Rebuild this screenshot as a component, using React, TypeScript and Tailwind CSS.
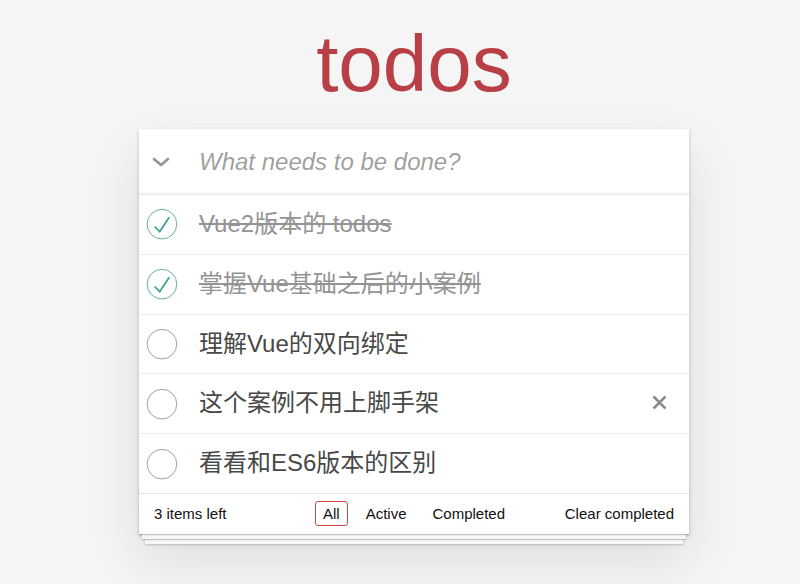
import React from "react";

const todos = [
  { text: "Vue2版本的 todos", done: true },
  { text: "掌握Vue基础之后的小案例", done: true },
  { text: "理解Vue的双向绑定", done: false },
  { text: "这个案例不用上脚手架", done: false, hover: true },
  { text: "看看和ES6版本的区别", done: false },
];

function Check({ done }: { done: boolean }) {
  return (
    <svg width="40" height="40" viewBox="-10 -18 100 135" className="shrink-0">
      <circle cx="50" cy="50" r="50" fill="none" stroke={done ? "#59A193" : "#949494"} strokeWidth="3" />
      {done && <path fill="#3EA390" d="M72 25L42 71 27 56l-4 4 20 20 34-52z" />}
    </svg>
  );
}

export default function App() {
  return (
    <div className="min-h-[584px] bg-[#f5f5f5] font-['Liberation_Sans','Noto_Sans_CJK_SC',sans-serif] text-[14px] leading-[1.4em] text-[#111]">
      <div className="flex justify-center pl-[28px] pt-[24px] pb-[40px]">
        <div className="w-[550px]">
          <h1 className="text-center text-[80px] leading-[80px] font-normal text-[#b83f45]">todos</h1>
          <section className="relative mt-[25px] bg-white shadow-[0_2px_4px_0_rgba(0,0,0,0.2),0_25px_50px_0_rgba(0,0,0,0.1)]">
            <header className="flex h-[65px] items-center shadow-[inset_0_-2px_1px_rgba(0,0,0,0.03)]">
              <div className="flex w-[44px] shrink-0 justify-center">
                <svg width="18" height="10" viewBox="0 0 18 10">
                  <path d="M2 2 L9 8 L16 2" fill="none" stroke="#949494" strokeWidth="2.6" strokeLinecap="round" strokeLinejoin="round" />
                </svg>
              </div>
              <input
                className="h-[65px] flex-1 bg-transparent pl-[16px] pr-[16px] text-[24px] leading-[1.4em] text-[#484848] outline-none placeholder:italic placeholder:text-[rgba(0,0,0,0.4)]"
                placeholder="What needs to be done?"
              />
            </header>
            <ul className="border-t border-[#e6e6e6]">
              {todos.map((t, i) => (
                <li
                  key={i}
                  className={`relative flex items-center ${i < todos.length - 1 ? "border-b border-[#ededed]" : ""}`}
                >
                  <Check done={t.done} />
                  <span
                    className={`flex-1 py-[15px] pl-[20px] pr-[15px] text-[24px] leading-[1.2] ${
                      t.done ? "text-[#949494] line-through" : "text-[#484848]"
                    }`}
                  >
                    {t.text}
                  </span>
                  {t.hover && (
                    <button className="absolute right-[10px] top-0 bottom-[3px] my-auto flex h-[40px] w-[40px] items-center justify-center">
                      <svg width="15" height="15" viewBox="0 0 15 15">
                        <path d="M1.5 1.5 L13.5 13.5 M13.5 1.5 L1.5 13.5" stroke="#8a8a8a" strokeWidth="2.5" />
                      </svg>
                    </button>
                  )}
                </li>
              ))}
            </ul>
            <footer className="relative grid h-[41px] grid-cols-[1fr_auto_1fr] items-center border-t border-[#e6e6e6] px-[15px] text-[15px] text-[#111]">
              <div className="pointer-events-none absolute inset-x-0 bottom-0 h-[50px] overflow-hidden shadow-[0_1px_1px_rgba(0,0,0,0.2),0_8px_0_-3px_#f6f6f6,0_9px_1px_-3px_rgba(0,0,0,0.2),0_16px_0_-6px_#f6f6f6,0_17px_2px_-6px_rgba(0,0,0,0.2)]" />
              <span className="relative leading-[20px]">3 items left</span>
              <ul className="relative flex items-center gap-[10px]">
                <li>
                  <a className="block rounded-[3px] border border-[#ce4646] px-[7px] py-[3px] leading-[17px]">All</a>
                </li>
                <li>
                  <a className="block rounded-[3px] border border-transparent px-[7px] py-[3px] leading-[17px]">Active</a>
                </li>
                <li>
                  <a className="block rounded-[3px] border border-transparent px-[7px] py-[3px] leading-[17px]">Completed</a>
                </li>
              </ul>
              <span className="relative text-right leading-[20px]">Clear completed</span>
            </footer>
          </section>
        </div>
      </div>
    </div>
  );
}
